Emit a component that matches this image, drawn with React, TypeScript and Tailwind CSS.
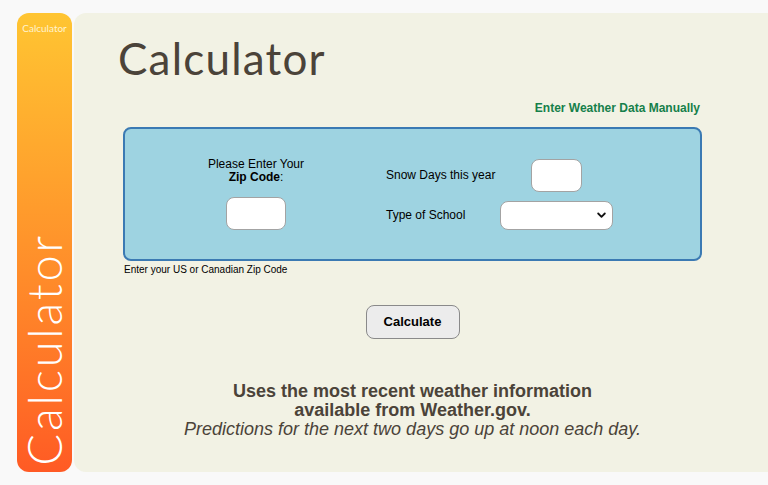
import React from 'react';

const ink = 'text-[#4b4339]';

const ZipCell: React.FC = () => (
  <div className="w-[260px] flex flex-col items-center">
    <p className="text-[12px] leading-[13px] text-black text-center">
      Please Enter Your
      <br />
      <b>Zip Code</b>:
    </p>
    <input
      type="text"
      className="mt-[13px] w-[60px] h-[33px] bg-white rounded-[8px] border border-[#a3a3a3]"
    />
  </div>
);

const WeatherCells: React.FC = () => (
  <div className="grid grid-cols-[114px_113px] items-center gap-y-[9px] text-[12px] text-black">
    <span>Snow Days this year</span>
    <div className="flex justify-center">
      <input
        type="text"
        className="w-[51px] h-[33px] bg-white rounded-[8px] border border-[#a3a3a3]"
      />
    </div>
    <span>Type of School</span>
    <div className="relative h-[29px] w-[113px] bg-white rounded-[8px] border border-[#a3a3a3]">
      <svg
        className="absolute right-[6px] top-[10px]"
        width="9"
        height="7"
        viewBox="0 0 9 7"
        fill="none"
        stroke="#111"
        strokeWidth="1.8"
        strokeLinecap="round"
        strokeLinejoin="round"
      >
        <path d="M1.2 1.5 4.5 4.8 7.8 1.5" />
      </svg>
    </div>
  </div>
);

export default function App() {
  return (
    <div
      className="w-full h-[485px] bg-[#f9f9f9] flex gap-[2px] pt-[13px] pb-[13px] pl-[17px] overflow-hidden"
      style={{ fontFamily: '"Liberation Sans", Arial, sans-serif' }}
    >
      <aside className="w-[55px] shrink-0 rounded-[12px] bg-linear-to-b from-[#ffc532] to-[#ff5a24] flex flex-col items-center justify-between pt-[9px] pb-[6px] font-['Lato',sans-serif]">
        <span className="text-[10px] leading-[12px] text-[#fff3cf]">Calculator</span>
        <span className="[writing-mode:vertical-rl] rotate-180 text-[47px] leading-[47px] text-white font-light tracking-[2.8px]">
          Calculator
        </span>
      </aside>

      <main className="flex-1 bg-[#f2f2e4] rounded-l-[12px]">
        <h1 className={`pl-[44px] pt-[20px] text-[44px] leading-[50px] tracking-[1.2px] font-['Lato',sans-serif] ${ink}`}>
          Calculator
        </h1>

        <div className="ml-[49px] w-[579px] mt-[18px]">
          <p className="text-right pr-[2px] text-[12px] leading-[14px] font-bold text-[#16804a]">
            Enter Weather Data Manually
          </p>

          <div className="mt-[12px] h-[134px] bg-[#9ed3e1] border-2 border-[#3b7ab3] rounded-[8px] flex items-center pl-[1px]">
            <ZipCell />
            <WeatherCells />
          </div>

          <p className="mt-[3px] pl-[1px] text-[10px] leading-[12px] text-black">
            Enter your US or Canadian Zip Code
          </p>

          <div className="flex justify-center mt-[29px]">
            <button className="w-[94px] h-[34px] bg-[#ececec] border border-[#8a8a8a] rounded-[8px] text-[13px] font-bold text-black">
              Calculate
            </button>
          </div>

          <div className={`mt-[43px] text-center ${ink}`}>
            <p className="text-[18px] leading-[19px] font-bold">
              Uses the most recent weather information
              <br />
              available from Weather.gov.
            </p>
            <p className="text-[18px] leading-[19px] italic">
              Predictions for the next two days go up at noon each day.
            </p>
          </div>
        </div>
      </main>
    </div>
  );
}
